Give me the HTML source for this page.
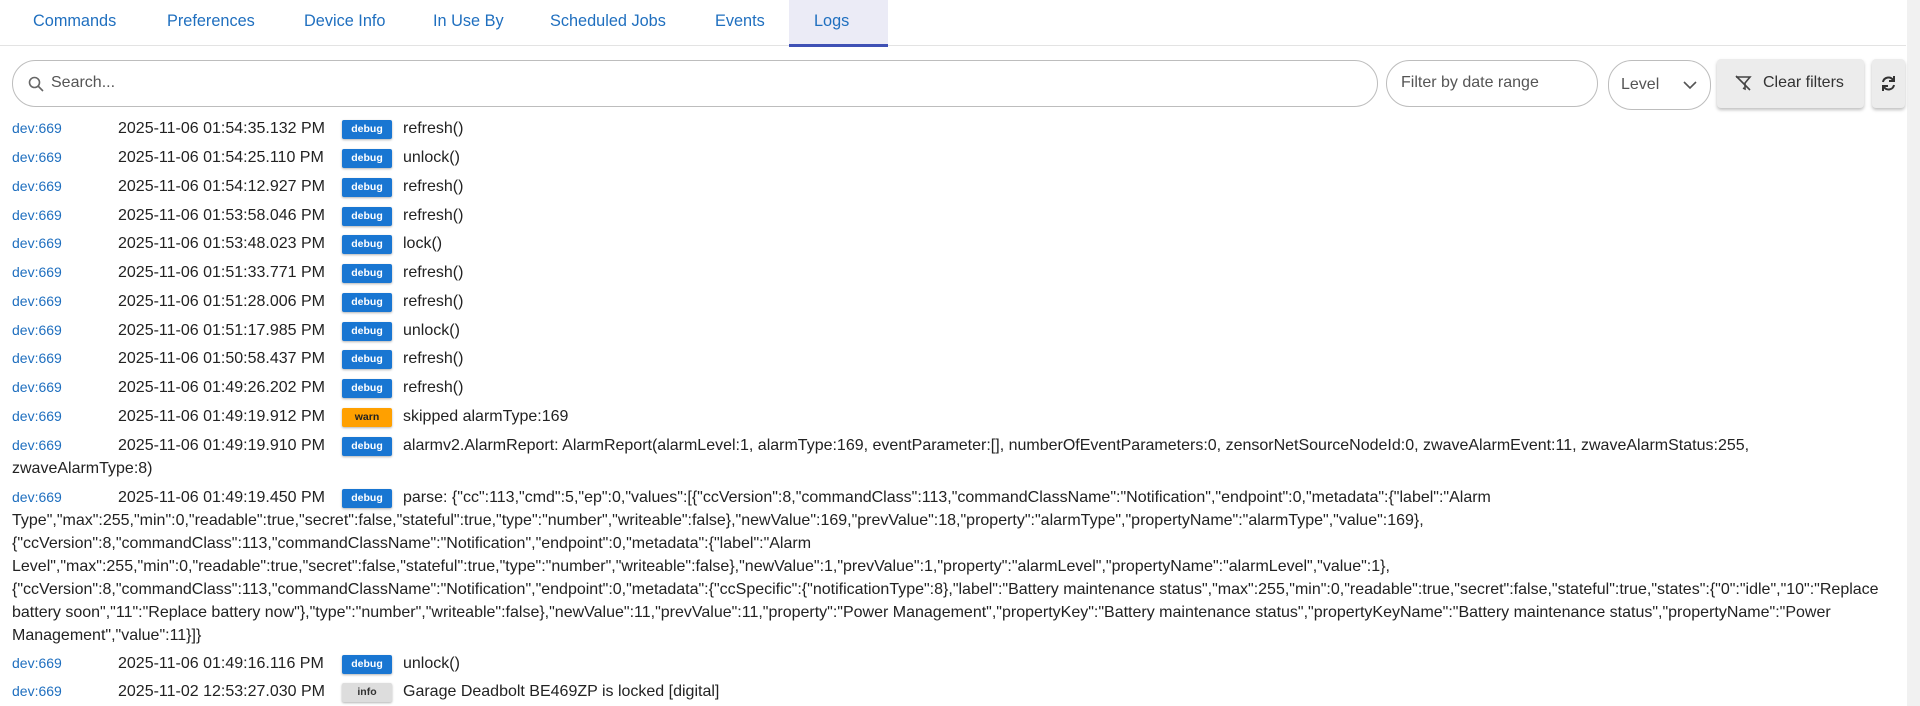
<!DOCTYPE html>
<html><head><meta charset="utf-8"><style>
*{box-sizing:border-box;margin:0;padding:0}
body{width:1920px;height:706px;overflow:hidden;background:#fff;font-family:"Liberation Sans",sans-serif;color:#222;position:relative}
.tabs{position:absolute;left:0;top:0;height:46px;width:1906px;border-bottom:1px solid #e3e3e3}
.tab{position:absolute;top:12px;font-size:16.3px;color:#1f6fbf}
.active{position:absolute;left:789px;top:0;width:99px;height:47px;background:#ebebf6;border-bottom:3px solid #3f51b5}
.box{position:absolute;border:1.5px solid #bdbdbd;border-radius:24px;background:#fff;font-size:16px;color:#555}
.btn{position:absolute;background:#ececec;border-radius:4px;box-shadow:0 2px 3px rgba(0,0,0,.25);font-size:16px;color:#333}
.row{position:absolute;left:12px;font-size:16px;white-space:nowrap;line-height:23.4px}
.dev{position:absolute;left:0;top:0;color:#1f6fbf;font-size:14px}
.dt{position:absolute;left:106px}
.b{position:absolute;left:330px;top:3px;width:50px;height:19px;border-radius:2px;font-size:10.5px;font-weight:bold;text-align:center;line-height:19px;color:#fff;background:#1976d2;box-shadow:0 1px 2px rgba(0,0,0,.3)}
.b.w{background:#ffa000;color:#222}.b.i{background:#ddd;color:#333}
.m{position:absolute;left:391px}
.wrap{left:12px;font-size:16px;position:absolute;white-space:nowrap;line-height:23.4px}
</style></head><body>
<div class="tabs"></div>
<div class="active"></div>
<div class="tab" style="left:33px">Commands</div>
<div class="tab" style="left:167px">Preferences</div>
<div class="tab" style="left:304px">Device Info</div>
<div class="tab" style="left:433px">In Use By</div>
<div class="tab" style="left:550px">Scheduled Jobs</div>
<div class="tab" style="left:715px">Events</div>
<div class="tab" style="left:814px">Logs</div>
<div style="position:absolute;left:1907px;top:0;width:13px;height:706px;background:#f1f1f1"></div>

<div class="box" style="left:12px;top:60px;width:1366px;height:47px">
<svg style="position:absolute;left:14px;top:14px" width="18" height="18" viewBox="0 0 18 18"><circle cx="7.5" cy="7.5" r="5" fill="none" stroke="#666" stroke-width="1.6"/><path d="M11 11l5 5" stroke="#666" stroke-width="1.6"/></svg>
<span style="position:absolute;left:38px;top:13px">Search...</span></div>
<div class="box" style="left:1386px;top:60px;width:212px;height:47px"><span style="position:absolute;left:14px;top:13px">Filter by date range</span></div>
<div class="box" style="left:1608px;top:60px;width:103px;height:50px"><span style="position:absolute;left:12px;top:15px">Level</span>
<svg style="position:absolute;left:74px;top:19px" width="14" height="10" viewBox="0 0 14 10"><path d="M1 2l6 6 6-6" fill="none" stroke="#555" stroke-width="1.6"/></svg></div>
<div class="btn" style="left:1717px;top:59px;width:147px;height:49px">
<svg style="position:absolute;left:17px;top:15px" width="18" height="18" viewBox="0 0 18 18"><path d="M2 3h14l-5 6v6l-2-1" fill="none" stroke="#444" stroke-width="1.6"/><path d="M2 2l14 14" stroke="#444" stroke-width="1.6"/></svg>
<span style="position:absolute;left:46px;top:15px">Clear filters</span></div>
<div class="btn" style="left:1872px;top:59px;width:33px;height:49px">
<svg style="position:absolute;left:8px;top:16px" width="17" height="17" viewBox="0 0 17 17"><path d="M3 7a5.5 5.5 0 0 1 10-2M14 10a5.5 5.5 0 0 1-10 2" fill="none" stroke="#333" stroke-width="2"/><path d="M14 1v5h-5M3 16v-5h5" fill="none" stroke="#333" stroke-width="2"/></svg></div>

<div class="row" style="top:117px"><span class="dev">dev:669</span><span class="dt">2025-11-06 01:54:35.132 PM</span><span class="b">debug</span><span class="m">refresh()</span></div>
<div class="row" style="top:146px"><span class="dev">dev:669</span><span class="dt">2025-11-06 01:54:25.110 PM</span><span class="b">debug</span><span class="m">unlock()</span></div>
<div class="row" style="top:175px"><span class="dev">dev:669</span><span class="dt">2025-11-06 01:54:12.927 PM</span><span class="b">debug</span><span class="m">refresh()</span></div>
<div class="row" style="top:204px"><span class="dev">dev:669</span><span class="dt">2025-11-06 01:53:58.046 PM</span><span class="b">debug</span><span class="m">refresh()</span></div>
<div class="row" style="top:232px"><span class="dev">dev:669</span><span class="dt">2025-11-06 01:53:48.023 PM</span><span class="b">debug</span><span class="m">lock()</span></div>
<div class="row" style="top:261px"><span class="dev">dev:669</span><span class="dt">2025-11-06 01:51:33.771 PM</span><span class="b">debug</span><span class="m">refresh()</span></div>
<div class="row" style="top:290px"><span class="dev">dev:669</span><span class="dt">2025-11-06 01:51:28.006 PM</span><span class="b">debug</span><span class="m">refresh()</span></div>
<div class="row" style="top:319px"><span class="dev">dev:669</span><span class="dt">2025-11-06 01:51:17.985 PM</span><span class="b">debug</span><span class="m">unlock()</span></div>
<div class="row" style="top:347px"><span class="dev">dev:669</span><span class="dt">2025-11-06 01:50:58.437 PM</span><span class="b">debug</span><span class="m">refresh()</span></div>
<div class="row" style="top:376px"><span class="dev">dev:669</span><span class="dt">2025-11-06 01:49:26.202 PM</span><span class="b">debug</span><span class="m">refresh()</span></div>
<div class="row" style="top:405px"><span class="dev">dev:669</span><span class="dt">2025-11-06 01:49:19.912 PM</span><span class="b w">warn</span><span class="m">skipped alarmType:169</span></div>
<div class="row" style="top:434px"><span class="dev">dev:669</span><span class="dt">2025-11-06 01:49:19.910 PM</span><span class="b">debug</span><span class="m">alarmv2.AlarmReport: AlarmReport(alarmLevel:1, alarmType:169, eventParameter:[], numberOfEventParameters:0, zensorNetSourceNodeId:0, zwaveAlarmEvent:11, zwaveAlarmStatus:255,</span></div>
<div class="wrap" style="top:457px">zwaveAlarmType:8)</div>
<div class="row" style="top:486px"><span class="dev">dev:669</span><span class="dt">2025-11-06 01:49:19.450 PM</span><span class="b">debug</span><span class="m">parse: {"cc":113,"cmd":5,"ep":0,"values":[{"ccVersion":8,"commandClass":113,"commandClassName":"Notification","endpoint":0,"metadata":{"label":"Alarm</span></div>
<div class="wrap" style="top:509px">Type","max":255,"min":0,"readable":true,"secret":false,"stateful":true,"type":"number","writeable":false},"newValue":169,"prevValue":18,"property":"alarmType","propertyName":"alarmType","value":169},</div>
<div class="wrap" style="top:532px">{"ccVersion":8,"commandClass":113,"commandClassName":"Notification","endpoint":0,"metadata":{"label":"Alarm</div>
<div class="wrap" style="top:555px">Level","max":255,"min":0,"readable":true,"secret":false,"stateful":true,"type":"number","writeable":false},"newValue":1,"prevValue":1,"property":"alarmLevel","propertyName":"alarmLevel","value":1},</div>
<div class="wrap" style="top:578px">{"ccVersion":8,"commandClass":113,"commandClassName":"Notification","endpoint":0,"metadata":{"ccSpecific":{"notificationType":8},"label":"Battery maintenance status","max":255,"min":0,"readable":true,"secret":false,"stateful":true,"states":{"0":"idle","10":"Replace</div>
<div class="wrap" style="top:601px">battery soon","11":"Replace battery now"},"type":"number","writeable":false},"newValue":11,"prevValue":11,"property":"Power Management","propertyKey":"Battery maintenance status","propertyKeyName":"Battery maintenance status","propertyName":"Power</div>
<div class="wrap" style="top:624px">Management","value":11}]}</div>
<div class="row" style="top:652px"><span class="dev">dev:669</span><span class="dt">2025-11-06 01:49:16.116 PM</span><span class="b">debug</span><span class="m">unlock()</span></div>
<div class="row" style="top:680px"><span class="dev">dev:669</span><span class="dt">2025-11-02 12:53:27.030 PM</span><span class="b i">info</span><span class="m">Garage Deadbolt BE469ZP is locked [digital]</span></div>
</body></html>
